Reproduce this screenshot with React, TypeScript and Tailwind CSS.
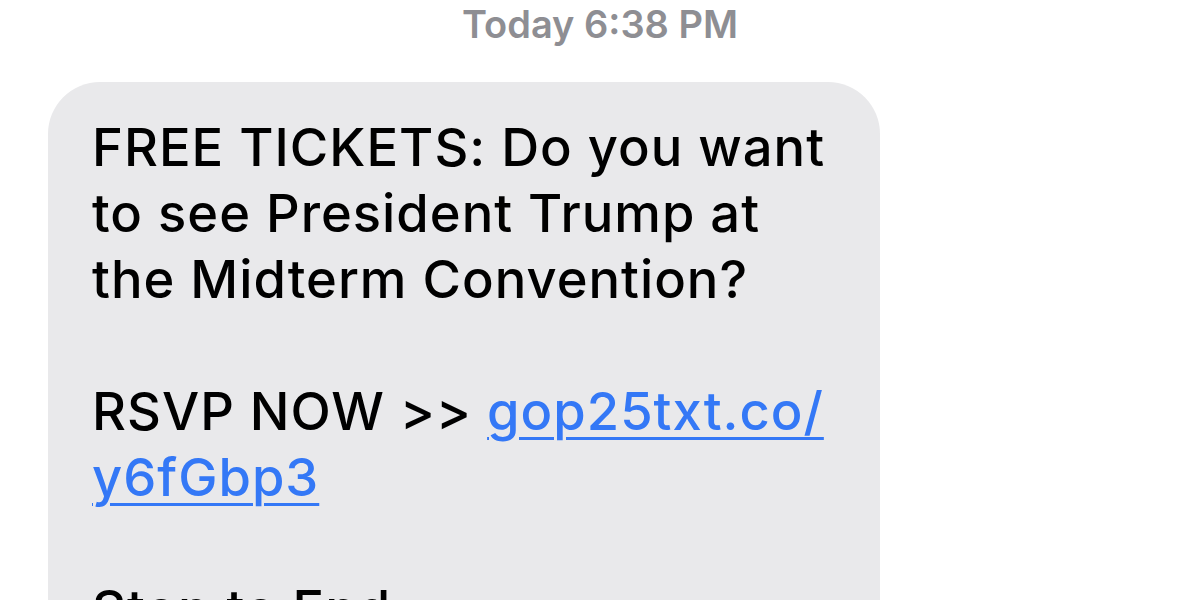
import React from "react";

const lines = ["FREE TICKETS: Do you want", "to see President Trump at", "the Midterm Convention?"];

export default function App() {
  return (
    <div className="w-[1200px] h-[600px] overflow-hidden bg-white font-['Inter','Noto_Sans',sans-serif]">
      <div className="pt-[2px] text-center text-[38px] leading-[44px] font-semibold text-[#8e8e93]">
        Today 6:38 PM
      </div>
      <div className="mt-[36px] ml-[48px] w-[832px] rounded-[52px] bg-[#e9e9eb] pl-[44px] pt-[32px] pb-[40px] text-[52.5px] leading-[66px] font-medium tracking-[1px] text-black">
        {lines.map((line) => (
          <div key={line} className="whitespace-nowrap">
            {line}
          </div>
        ))}
        <div className="h-[66px]" />
        <div className="whitespace-nowrap">
          RSVP NOW &gt;&gt;{" "}
          <span className="text-[#3478f6] underline decoration-[3px] underline-offset-[7px]">gop25txt.co/</span>
        </div>
        <div className="whitespace-nowrap">
          <span className="text-[#3478f6] underline decoration-[3px] underline-offset-[7px]">y6fGbp3</span>
        </div>
        <div className="h-[66px]" />
        <div className="whitespace-nowrap">Stop to End</div>
      </div>
    </div>
  );
}
